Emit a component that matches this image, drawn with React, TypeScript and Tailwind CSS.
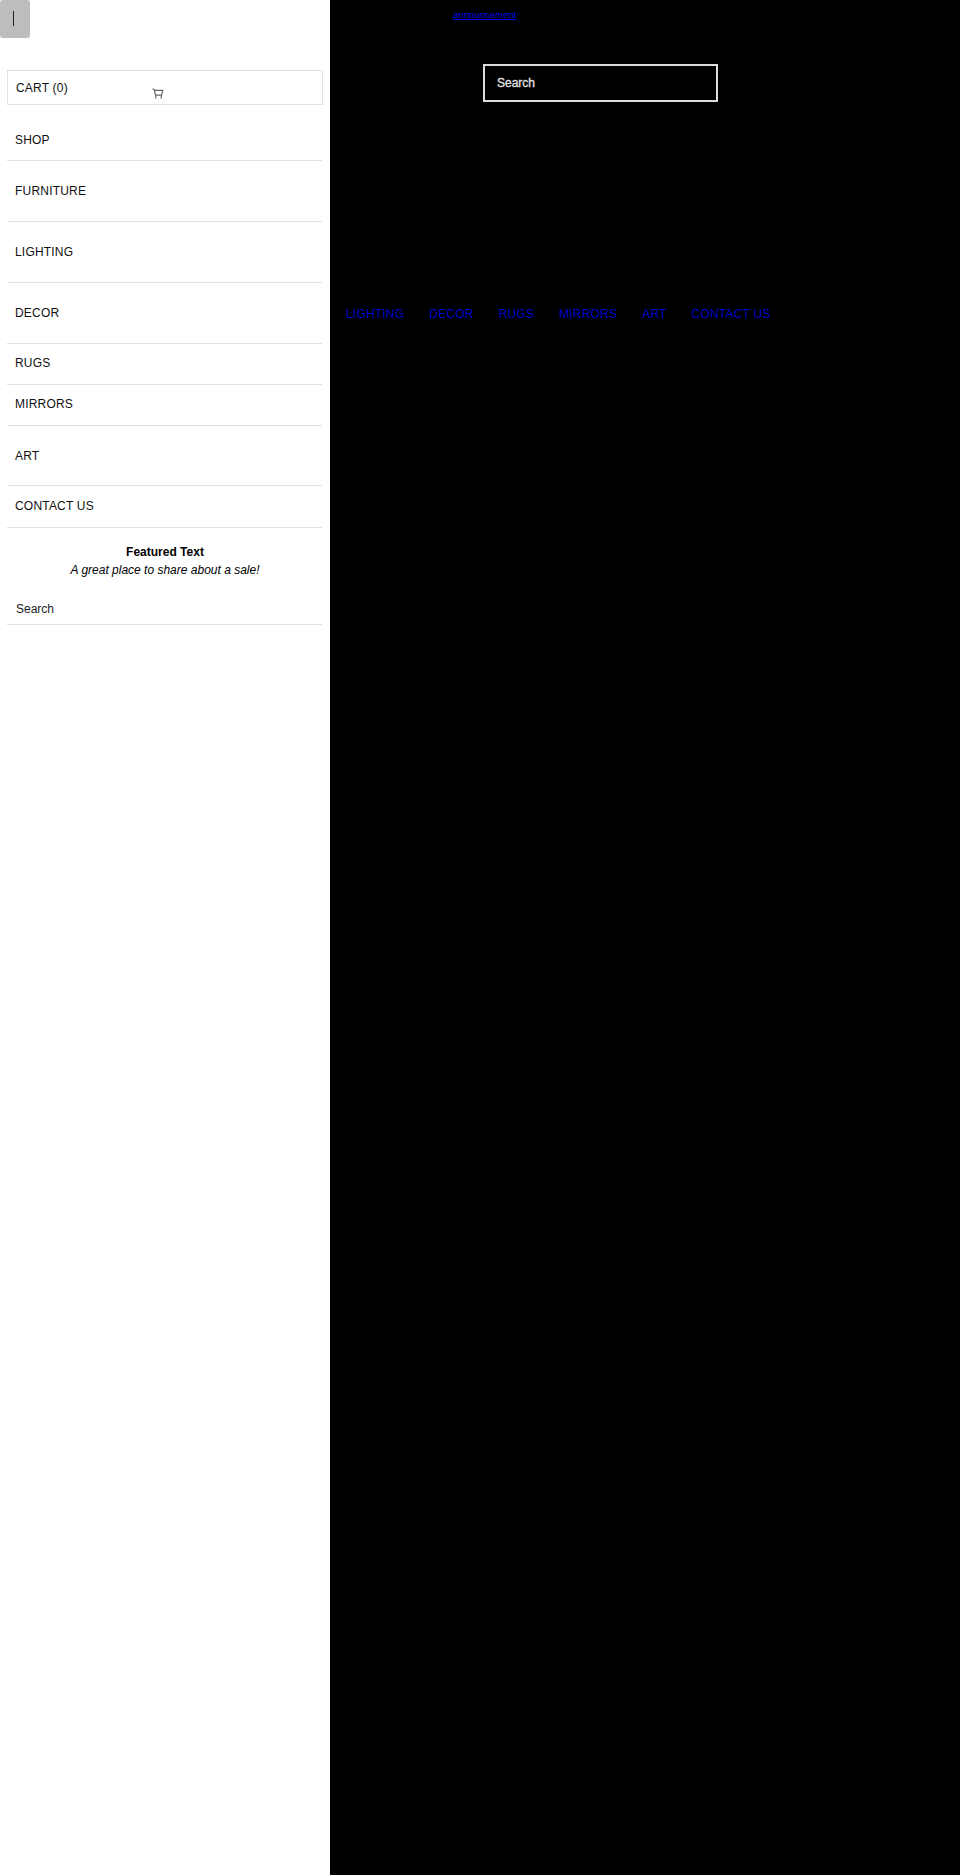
import React from "react";

const items: [string, string][] = [
  ["SHOP", "h-[41px] pt-[12px]"],
  ["FURNITURE", "h-[61px] pt-[22px]"],
  ["LIGHTING", "h-[61px] pt-[22px]"],
  ["DECOR", "h-[61px] pt-[22px]"],
  ["RUGS", "h-[41px] pt-[11px]"],
  ["MIRRORS", "h-[41px] pt-[11px]"],
  ["ART", "h-[60px] pt-[22px]"],
  ["CONTACT US", "h-[42px] pt-[12px]"],
];

const top = ["LIGHTING", "DECOR", "RUGS", "MIRRORS", "ART", "CONTACT US"];

export default function App() {
  return (
    <div className="flex h-[1875px] w-[960px] overflow-hidden font-['Liberation_Sans',sans-serif]">
      <aside className="w-[330px] shrink-0 bg-white text-[#111]">
        <div className="h-[38px] w-[30px] rounded-[3px] bg-[#bdbdbd] pl-[13px] pt-[11px]">
          <div className="h-[15px] w-px bg-[#222]" />
        </div>
        <div className="mx-[7px] mt-[32px] flex h-[35px] w-[316px] border border-[#e2e2e2] pl-[8px] pt-[9px] text-[12px] leading-[16px] tracking-[0.2px]">
          <span>CART (0)</span>
          <svg className="ml-[84px] mt-[8px]" width="12" height="12" viewBox="0 0 12 12" fill="none" stroke="#666" strokeWidth="1.2">
            <path d="M0.5 0.8L2.2 1.6L3.5 7.2H9.6L10.8 2.4H2.4" />
            <path d="M3.5 7.2L4 10.5M9.6 7.2L9 10.5" />
          </svg>
        </div>
        <nav className="mx-[7px] mt-[15px] w-[315px]">
          {items.map(([label, cls]) => (
            <div key={label} className={`${cls} border-b border-[#e0e0e0] pl-[8px] text-[12px] leading-[16px] tracking-[0.2px]`}>
              {label}
            </div>
          ))}
        </nav>
        <div className="mt-[15px] text-center text-[12px] leading-[18px] text-black">
          <p className="font-bold">Featured Text</p>
          <p className="italic">A great place to share about a sale!</p>
        </div>
        <div className="mx-[7px] mt-[21px] h-[25px] w-[315px] border-b border-[#e0e0e0] pl-[9px] pt-[1px] text-[12px] leading-[16px] text-[#222]">
          Search
        </div>
      </aside>
      <main className="flex-1 bg-black">
        <div className="pl-[123px] pt-[9px] text-[9.6px] leading-[12px]">
          <a href="#" className="text-[#0000ee] underline">announcement</a>
        </div>
        <div className="ml-[153px] mt-[43px] flex h-[38px] w-[235px] items-center border-2 border-[#dcdcdc] pl-[12px] text-[12px] text-[#e5e5e5] [-webkit-text-stroke:0.3px_#e5e5e5]">
          Search
        </div>
        <nav className="ml-[16px] mt-[204px] flex gap-[25px] text-[12px] leading-[16px] tracking-[0.2px] text-[#0000cc]">
          {top.map((t) => (
            <a key={t} href="#">{t}</a>
          ))}
        </nav>
      </main>
    </div>
  );
}
